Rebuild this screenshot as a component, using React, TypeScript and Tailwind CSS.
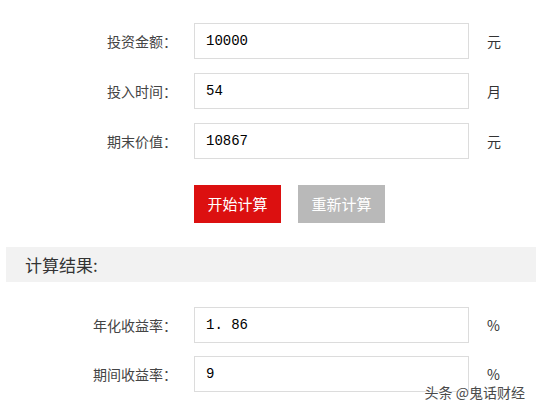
import React from "react";

const cjk = { fontFamily: '"Noto Sans CJK SC", "Liberation Sans", sans-serif' };
const mono = { fontFamily: '"Liberation Mono", "Noto Sans CJK SC", monospace' };

function Row({ label, value, unit, className = "" }: { label: string; value: string; unit: string; className?: string }) {
  return (
    <div className={`flex items-center ${className}`}>
      <div className="w-[177px] text-right text-[14px] text-[#444]" style={cjk}>
        {label}
      </div>
      <div className="ml-[17px] flex h-[36px] w-[275px] items-center border border-[#dcdcdc] bg-white pl-[11px] text-[14px] text-black" style={mono}>
        {value}
      </div>
      <div className="ml-[18px] text-[14px] text-[#333]" style={cjk}>
        {unit}
      </div>
    </div>
  );
}

export default function App() {
  return (
    <div className="relative h-[409px] w-[536px] overflow-hidden bg-white" style={cjk}>
      <div className="pt-[23px]">
        <Row label="投资金额：" value="10000" unit="元" />
        <Row label="投入时间：" value="54" unit="月" className="mt-[14px]" />
        <Row label="期末价值：" value="10867" unit="元" className="mt-[14px]" />
      </div>

      {/* 按钮 */}
      <div className="mt-[26px] flex pl-[194px]">
        <button className="h-[38px] w-[87px] bg-[#dc1010] text-[15px] text-white">开始计算</button>
        <button className="ml-[17px] h-[38px] w-[87px] bg-[#b9b9b9] text-[15px] text-white">重新计算</button>
      </div>

      <div className="ml-[6px] mt-[24px] flex h-[35px] items-center bg-[#f2f2f2] pl-[19px] text-[17px] text-[#333]">
        计算结果:
      </div>

      <div className="pt-[25px]">
        <Row label="年化收益率：" value="1. 86" unit="%" />
        <Row label="期间收益率：" value="9" unit="%" className="mt-[13px]" />
      </div>

      <div
        className="absolute bottom-[9px] right-[11px] text-[14px] leading-[16px] text-[#4a4a4a]"
        style={{ ...cjk, textShadow: "0 0 2px #fff, 0 0 2px #fff" }}
      >
        头条 @鬼话财经
      </div>
    </div>
  );
}
